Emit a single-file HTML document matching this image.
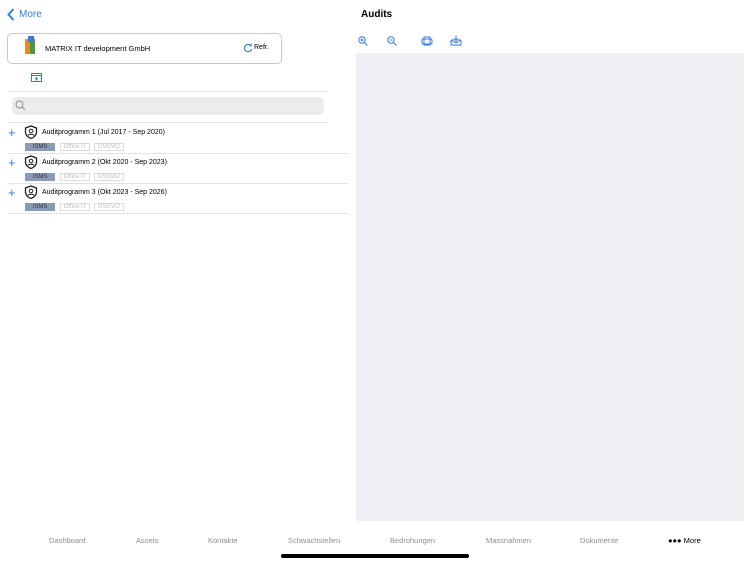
<!DOCTYPE html>
<html><head><style>
*{margin:0;padding:0;box-sizing:border-box}
body{width:750px;height:562px;background:#fff;font-family:"Liberation Sans",sans-serif;position:relative;overflow:hidden;color:#000}
.a{position:absolute}
.blue{color:#2f7de1}
.tag{position:absolute;height:8px;font-size:6px;line-height:7px;text-align:center;border:1px solid #ddd;color:#bbb}
.isms{background:#8a9bb8;color:#333;border-color:#8a9bb8}
.tab{position:absolute;top:536px;font-size:7.5px;color:#8e8e93}
.sep{position:absolute;height:1px;background:#e3e3e6}
</style></head><body>
<svg class="a" style="left:7px;top:8px" width="8" height="13" viewBox="0 0 8 13"><path d="M6.5 1L1.5 6.5 6.5 12" fill="none" stroke="#2f7de1" stroke-width="2"/></svg>
<div class="a blue" style="left:19px;top:9px;font-size:10px">More</div>
<div class="a" style="left:361px;top:9px;font-size:10px;font-weight:bold">Audits</div>

<div class="a" style="left:7px;top:33px;width:275px;height:31px;border:1px solid #c8c8cc;border-radius:5px"></div>
<div class="a" style="left:25px;top:39px;width:5px;height:15px;background:#e08a2a"></div>
<div class="a" style="left:30px;top:39px;width:5px;height:15px;background:#4a9a3a"></div>
<div class="a" style="left:28px;top:36px;width:6px;height:6px;background:#3a7ad0"></div>
<div class="a" style="left:45px;top:44px;font-size:7.5px">MATRIX IT development GmbH</div>
<svg class="a" style="left:243px;top:43px" width="10" height="10" viewBox="0 0 10 10"><path d="M8 3A3.6 3.6 0 1 0 8.5 6" fill="none" stroke="#2f7de1" stroke-width="1.1"/><path d="M5.5 1.5L8 3 8.5 0.5" fill="none" stroke="#2f7de1" stroke-width="1"/></svg>
<div class="a" style="left:254px;top:44px;font-size:7px">Refr.</div>

<svg class="a" style="left:31px;top:72px" width="11" height="10" viewBox="0 0 11 10"><rect x="0.5" y="1.5" width="10" height="8" fill="none" stroke="#2f7de1"/><path d="M0.5 3.5h10M5.5 5v3.5M3.8 6.8h3.4" stroke="#2f7de1"/></svg>
<div class="sep" style="left:8px;top:91px;width:320px"></div>
<div class="a" style="left:12px;top:97px;width:312px;height:18px;background:#ececee;border-radius:5px"></div>
<svg class="a" style="left:15px;top:100px" width="11" height="11" viewBox="0 0 11 11"><circle cx="4.5" cy="4.5" r="3.5" fill="none" stroke="#8e8e93"/><path d="M7 7l3 3" stroke="#8e8e93"/></svg>
<div class="sep" style="left:8px;top:122px;width:320px"></div>

<div class="sep" style="left:8px;top:153px;width:340px"></div>
<div class="sep" style="left:8px;top:183px;width:340px"></div>
<div class="sep" style="left:8px;top:213px;width:340px"></div>

<svg width="0" height="0" style="position:absolute"><defs><g id="sh"><path d="M7 1L12.5 3V7C12.5 10 10 12.5 7 13.5 4 12.5 1.5 10 1.5 7V3Z" fill="none" stroke="#222" stroke-width="1.3"/><circle cx="7" cy="6" r="1.8" fill="none" stroke="#222"/><path d="M4 10.5C4.5 8.8 9.5 8.8 10 10.5" fill="none" stroke="#222"/></g></defs></svg>

<div class="a blue" style="left:8px;top:125px;font-size:13px">+</div>
<svg class="a" style="left:24px;top:125px" width="14" height="14"><use href="#sh"/></svg>
<div class="a" style="left:42px;top:129px;font-size:7px">Auditprogramm 1 (Jul 2017 - Sep 2020)</div>
<div class="tag isms" style="left:25px;top:143px;width:30px">ISMS</div>
<div class="tag" style="left:60px;top:143px;width:30px">Office IT</div>
<div class="tag" style="left:94px;top:143px;width:30px">DSGVO</div>

<div class="a blue" style="left:8px;top:155px;font-size:13px">+</div>
<svg class="a" style="left:24px;top:155px" width="14" height="14"><use href="#sh"/></svg>
<div class="a" style="left:42px;top:159px;font-size:7px">Auditprogramm 2 (Okt 2020 - Sep 2023)</div>
<div class="tag isms" style="left:25px;top:173px;width:30px">ISMS</div>
<div class="tag" style="left:60px;top:173px;width:30px">Office IT</div>
<div class="tag" style="left:94px;top:173px;width:30px">DSGVO</div>

<div class="a blue" style="left:8px;top:185px;font-size:13px">+</div>
<svg class="a" style="left:24px;top:185px" width="14" height="14"><use href="#sh"/></svg>
<div class="a" style="left:42px;top:189px;font-size:7px">Auditprogramm 3 (Okt 2023 - Sep 2026)</div>
<div class="tag isms" style="left:25px;top:203px;width:30px">ISMS</div>
<div class="tag" style="left:60px;top:203px;width:30px">Office IT</div>
<div class="tag" style="left:94px;top:203px;width:30px">DSGVO</div>

<svg class="a" style="left:358px;top:36px" width="10" height="10" viewBox="0 0 10 10"><circle cx="4" cy="4" r="3.2" fill="none" stroke="#2f7de1"/><path d="M6.5 6.5L9.5 9.5M2.5 4h3M4 2.5v3" stroke="#2f7de1"/></svg>
<svg class="a" style="left:387px;top:36px" width="10" height="10" viewBox="0 0 10 10"><circle cx="4" cy="4" r="3.2" fill="none" stroke="#2f7de1"/><path d="M6.5 6.5L9.5 9.5M2.5 4h3" stroke="#2f7de1"/></svg>
<svg class="a" style="left:421px;top:36px" width="12" height="10" viewBox="0 0 12 10"><rect x="1" y="3" width="10" height="5" rx="1.5" fill="none" stroke="#2f7de1"/><rect x="3" y="1" width="6" height="8" fill="none" stroke="#2f7de1"/></svg>
<svg class="a" style="left:450px;top:35px" width="12" height="11" viewBox="0 0 12 11"><path d="M1 6v4h10V6L9 4M3 4L1 6h3l1 1.5h2L8 6h3M6 0.5v5M4 3.5l2 2 2-2" fill="none" stroke="#2f7de1"/></svg>
<div class="a" style="left:356px;top:53px;width:388px;height:468px;background:#efeff4"></div>

<div class="tab" style="left:49px">Dashboard</div>
<div class="tab" style="left:136px">Assets</div>
<div class="tab" style="left:208px">Kontakte</div>
<div class="tab" style="left:288px">Schwachstellen</div>
<div class="tab" style="left:390px">Bedrohungen</div>
<div class="tab" style="left:486px">Massnahmen</div>
<div class="tab" style="left:580px">Dokumente</div>
<div class="tab" style="left:668px;color:#000">●●● More</div>
<div class="a" style="left:281px;top:554px;width:188px;height:4px;border-radius:2px;background:#000"></div>
</body></html>
